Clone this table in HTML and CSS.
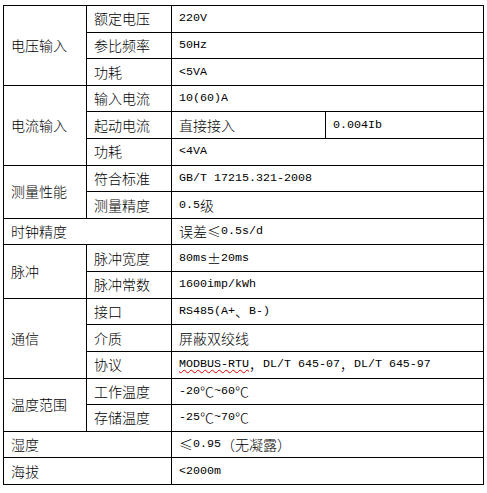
FILE: index.html
```html
<!DOCTYPE html>
<html lang="zh-CN">
<head>
<meta charset="utf-8">
<title>技术参数</title>
<link rel="stylesheet" href="styles.css">
</head>
<body>
<div class="sheet">
  <div class="c r3">电压输入</div>
  <div class="c">额定电压</div>
  <div class="c w2"><span class="en">220V</span></div>
  <div class="c">参比频率</div>
  <div class="c w2"><span class="en">50Hz</span></div>
  <div class="c">功耗</div>
  <div class="c w2"><span class="en">&lt;5VA</span></div>

  <div class="c r3">电流输入</div>
  <div class="c">输入电流</div>
  <div class="c w2"><span class="en">10(60)A</span></div>
  <div class="c">起动电流</div>
  <div class="c">直接接入</div>
  <div class="c"><span class="en">0.004Ib</span></div>
  <div class="c">功耗</div>
  <div class="c w2"><span class="en">&lt;4VA</span></div>

  <div class="c r2">测量性能</div>
  <div class="c">符合标准</div>
  <div class="c w2"><span class="en">GB/T 17215.321-2008</span></div>
  <div class="c">测量精度</div>
  <div class="c w2"><span class="en">0.5</span>级</div>

  <div class="c w2">时钟精度</div>
  <div class="c w2">误差≤<span class="en">0.5s/d</span></div>

  <div class="c r2">脉冲</div>
  <div class="c">脉冲宽度</div>
  <div class="c w2"><span class="en">80ms</span>±<span class="en">20ms</span></div>
  <div class="c">脉冲常数</div>
  <div class="c w2"><span class="en">1600imp/kWh</span></div>

  <div class="c r3">通信</div>
  <div class="c">接口</div>
  <div class="c w2"><span class="en">RS485(A+</span>、<span class="en">B-)</span></div>
  <div class="c">介质</div>
  <div class="c w2">屏蔽双绞线</div>
  <div class="c">协议</div>
  <div class="c w2"><span class="en"><span class="spell">MODBUS-RTU</span></span>，<span class="en">DL/T 645-07</span>，<span class="en">DL/T 645-97</span></div>

  <div class="c r2">温度范围</div>
  <div class="c">工作温度</div>
  <div class="c w2"><span class="en">-20</span>℃<span class="en">~60</span>℃</div>
  <div class="c">存储温度</div>
  <div class="c w2"><span class="en">-25</span>℃<span class="en">~70</span>℃</div>

  <div class="c w2">湿度</div>
  <div class="c w2">≤<span class="en">0.95 </span>（无凝露）</div>

  <div class="c w2">海拔</div>
  <div class="c w2"><span class="en">&lt;2000m</span></div>
</div>
</body>
</html>
```

FILE: styles.css
```css
html, body {
  margin: 0;
  padding: 0;
  background: #ffffff;
}

.sheet {
  display: grid;
  grid-template-columns: 83px 85px 154px 158px;
  grid-template-rows: repeat(18, 1fr);
  box-sizing: border-box;
  width: 481px;
  height: 480px;
  margin: 5px 0 0 3px;
  border-top: 1px solid #000;
  border-left: 1px solid #000;
  font-family: "Noto Sans CJK SC", sans-serif;
  font-size: 14px;
  font-weight: 300;
  line-height: 20px;
  color: #000;
}

.c {
  display: flex;
  align-items: center;
  padding: 0 0 1px 7px;
  border-right: 1px solid #000;
  border-bottom: 1px solid #000;
  white-space: nowrap;
  min-height: 0;
}

.r2 { grid-row: span 2; }
.r3 { grid-row: span 3; }
.w2 { grid-column: span 2; }

.en {
  font-family: "Liberation Mono", monospace;
  font-size: 11.67px;
  font-weight: 400;
}

.spell {
  text-decoration: underline wavy #e00000;
  text-decoration-thickness: 1px;
  text-underline-offset: 2px;
}
```
